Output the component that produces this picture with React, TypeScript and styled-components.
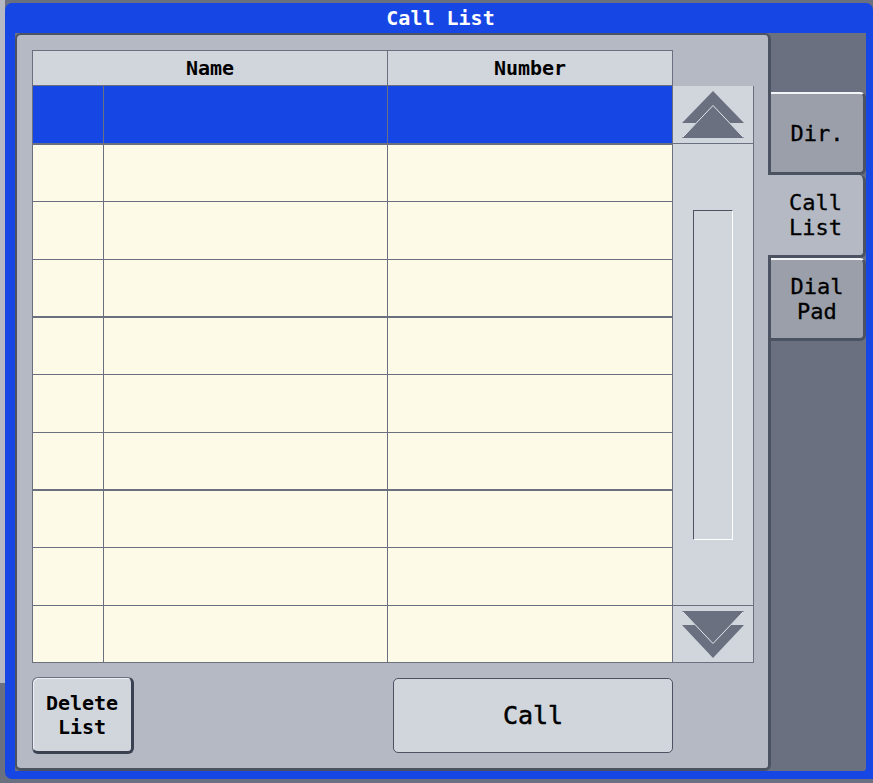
import React from "react";
import styled, { createGlobalStyle } from "styled-components";

const C = {
  blue: "#1646e3",
  dark: "#6b7080",
  panel: "#b4b9c4",
  light: "#d1d5dc",
  cream: "#fefae8",
  edge: "#4b5363",
  tab: "#9a9fa9",
  line: "#6b7080",
};

const Global = createGlobalStyle`
  html, body { margin: 0; padding: 0; }
  body {
    width: 873px;
    height: 783px;
    overflow: hidden;
    background: linear-gradient(${C.panel}, ${C.panel}) 0 0 / 5px 683px no-repeat, ${C.dark};
    font-family: "DejaVu Sans Mono", "Liberation Mono", monospace;
  }
`;

const Window = styled.div`
  margin: 3px 0 0 5px;
  width: 868px;
  height: 776px;
  box-sizing: border-box;
  background: ${C.blue};
  border-radius: 7px 7px 0 7px;
  padding: 0 7px 8px 10px;
  display: flex;
  flex-direction: column;
`;

const Title = styled.div`
  height: 30px;
  display: flex;
  align-items: center;
  justify-content: center;
  color: #fff;
  font-weight: bold;
  font-size: 20px;
`;

const Body = styled.div`
  flex: 1;
  display: flex;
  background: ${C.dark};
  border-radius: 0 0 3px 0;
`;

const Panel = styled.div`
  width: 756px;
  box-sizing: border-box;
  background: ${C.panel};
  border: 2px solid ${C.edge};
  border-right-width: 3px;
  border-bottom-width: 3px;
  border-radius: 6px;
  padding: 15px 0 0 15px;
  display: flex;
  flex-direction: column;
`;

const Grid = styled.div`
  display: grid;
  grid-template-columns: 72px 284px 285px 81px;
  grid-template-rows: 36px 59px 57px 58px 58px 57px 58px 58px 57px 58px 57px;
`;

const HeadCell = styled.div<{ $span?: number; $first?: boolean }>`
  grid-column: span ${(p) => p.$span || 1};
  background: ${C.light};
  border-top: 1px solid ${C.line};
  border-bottom: 1px solid ${C.line};
  border-right: 1px solid ${C.line};
  border-left: ${(p) => (p.$first ? `1px solid ${C.line}` : "none")};
  display: flex;
  align-items: center;
  justify-content: center;
  font-weight: bold;
  font-size: 20px;
  color: #000;
`;

const HeadGap = styled.div``;

const Cell = styled.div<{ $sel?: boolean; $first?: boolean; $thick?: boolean }>`
  background: ${(p) => (p.$sel ? C.blue : C.cream)};
  border-right: 1px solid ${C.line};
  border-bottom: ${(p) => (p.$thick ? 2 : 1)}px solid ${C.line};
  border-left: ${(p) => (p.$first ? `1px solid ${C.line}` : "none")};
`;

const Scroll = styled.div`
  grid-column: 4;
  grid-row: 2 / span 10;
  background: ${C.light};
  border-right: 1px solid ${C.line};
  border-bottom: 1px solid ${C.line};
  display: flex;
  flex-direction: column;
`;

const ScrollBtn = styled.div<{ $down?: boolean }>`
  height: ${(p) => (p.$down ? 57 : 58)}px;
  box-sizing: border-box;
  border-bottom: ${(p) => (p.$down ? "none" : `1px solid ${C.line}`)};
  border-top: ${(p) => (p.$down ? `1px solid ${C.line}` : "none")};
  display: flex;
  svg { display: block; }
`;

const Track = styled.div`
  flex: 1;
  display: flex;
  align-items: center;
  justify-content: center;
`;

const Thumb = styled.div`
  width: 40px;
  height: 330px;
  box-sizing: border-box;
  border-top: 1px solid ${C.edge};
  border-left: 1px solid ${C.edge};
  border-right: 1px solid #fff;
  border-bottom: 1px solid #fff;
  margin-left: -1px;
`;

const Bottom = styled.div`
  display: grid;
  grid-template-columns: 102px 259px 280px;
  align-items: center;
  margin-top: 14px;
`;

const DeleteBtn = styled.div`
  grid-column: 1;
  height: 77px;
  box-sizing: border-box;
  background: ${C.light};
  border: 1px solid ${C.line};
  border-right: 3px solid #3a4252;
  border-bottom: 3px solid #3a4252;
  border-radius: 6px;
  box-shadow: inset 1px 1px 0 #eef0f4;
  display: flex;
  align-items: center;
  justify-content: center;
  text-align: center;
  font-weight: bold;
  font-size: 20px;
  line-height: 24px;
  color: #000;
`;

const CallBtn = styled.div`
  grid-column: 3;
  height: 75px;
  box-sizing: border-box;
  background: ${C.light};
  border: 1px solid ${C.edge};
  border-radius: 5px;
  display: flex;
  align-items: center;
  justify-content: center;
  font-size: 25px;
  -webkit-text-stroke: 0.5px #000;
  color: #000;
`;

const Side = styled.div`
  width: 98px;
  margin-left: -3px;
  padding-top: 59px;
  display: flex;
  flex-direction: column;
`;

const Tab = styled.div<{ $active?: boolean }>`
  position: relative;
  z-index: ${(p) => (p.$active ? 1 : 0)};
  height: 83px;
  box-sizing: border-box;
  margin-left: ${(p) => (p.$active ? 0 : 3)}px;
  background: ${(p) => (p.$active ? C.panel : C.tab)};
  border-top: ${(p) => (p.$active ? "none" : "2px solid #f4f5f8")};
  border-right: 3px solid ${C.edge};
  border-bottom: 3px solid ${C.edge};
  border-radius: 0 6px 6px 0;
  display: flex;
  align-items: center;
  justify-content: center;
  text-align: center;
  font-size: 22px;
  line-height: 25px;
  -webkit-text-stroke: 0.3px #000;
  color: #000;
`;

const rows = [0, 1, 2, 3, 4, 5, 6, 7, 8, 9];

function UpArrow() {
  return (
    <svg width="80" height="57" viewBox="0 0 80 57">
      <polygon points="9,37 40,5 71,37" fill={C.dark} />
      <polygon points="9,52 40,19 71,52" fill={C.dark} />
      <polyline points="10,51 40,19.5 70,51" fill="none" stroke="#e4e7ec" strokeWidth="1" />
    </svg>
  );
}

function DownArrow() {
  return (
    <svg width="80" height="56" viewBox="0 0 80 56">
      <polygon points="9,19 40,52 71,19" fill={C.dark} />
      <polygon points="9,5 40,38 71,5" fill={C.dark} />
      <polyline points="10,6 40,37.5 70,6" fill="none" stroke="#e4e7ec" strokeWidth="1" />
    </svg>
  );
}

export default function App() {
  return (
    <>
      <Global />
      <Window>
        <Title>Call List</Title>
        <Body>
          <Panel>
            <Grid>
              <HeadCell $span={2} $first>Name</HeadCell>
              <HeadCell>Number</HeadCell>
              <HeadGap />
              {rows.map((r) => (
                <React.Fragment key={r}>
                  <Cell $first $sel={r === 0} $thick={r % 3 === 0 && r < 9} />
                  <Cell $sel={r === 0} $thick={r % 3 === 0 && r < 9} />
                  <Cell $sel={r === 0} $thick={r % 3 === 0 && r < 9} />
                </React.Fragment>
              ))}
              <Scroll>
                <ScrollBtn>
                  <UpArrow />
                </ScrollBtn>
                <Track>
                  <Thumb />
                </Track>
                <ScrollBtn $down>
                  <DownArrow />
                </ScrollBtn>
              </Scroll>
            </Grid>
            <Bottom>
              <DeleteBtn>
                Delete
                <br />
                List
              </DeleteBtn>
              <CallBtn>Call</CallBtn>
            </Bottom>
          </Panel>
          <Side>
            <Tab>Dir.</Tab>
            <Tab $active>
              Call
              <br />
              List
            </Tab>
            <Tab>
              Dial
              <br />
              Pad
            </Tab>
          </Side>
        </Body>
      </Window>
    </>
  );
}
